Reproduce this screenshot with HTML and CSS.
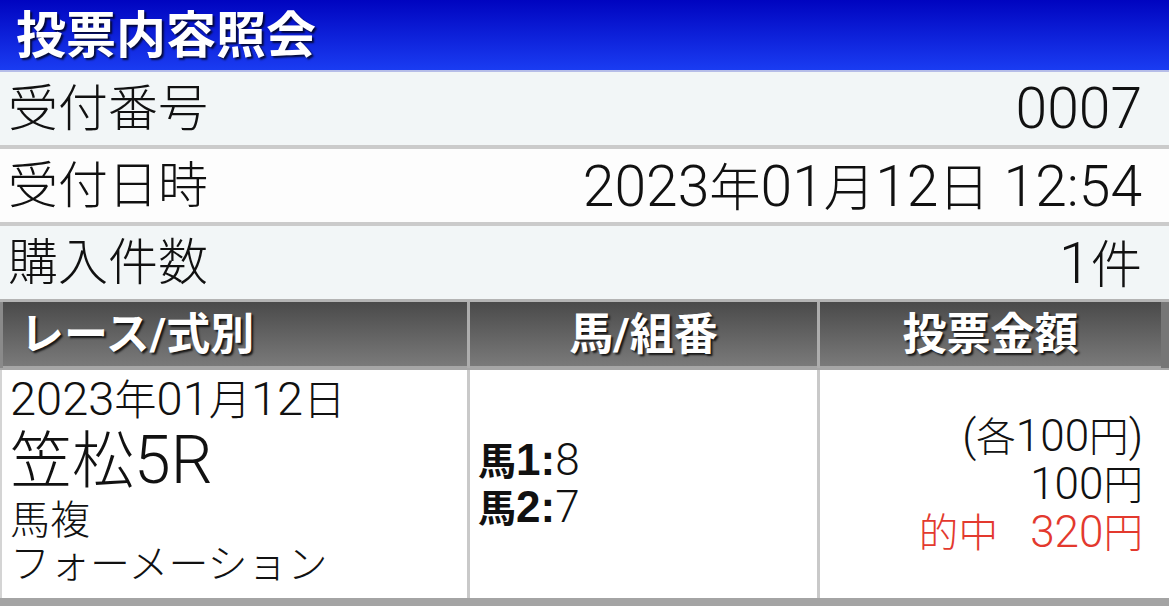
FILE: index.html
```html
<!DOCTYPE html>
<html lang="ja">
<head>
<meta charset="utf-8">
<title>投票内容照会</title>
<link rel="stylesheet" href="styles.css">
</head>
<body>
<div class="page">
  <header class="title"><span class="title-text">投票内容照会</span></header>
  <section class="info">
    <div class="row alt"><span class="label">受付番号</span><span class="value">0007</span></div>
    <div class="row"><span class="label">受付日時</span><span class="value">2023<span class="k">年</span>01<span class="k">月</span>12<span class="k">日</span> 12:54</span></div>
    <div class="row alt last"><span class="label">購入件数</span><span class="value">1<span class="k">件</span></span></div>
  </section>
  <section class="table">
    <div class="thead">
      <div class="th first">レース/式別</div>
      <div class="th">馬/組番</div>
      <div class="th lastc">投票金額</div>
    </div>
    <div class="tbody">
      <div class="td c1">
        <div class="date">2023<span class="k">年</span>01<span class="k">月</span>12<span class="k">日</span></div>
        <div class="race"><span class="kr">笠松</span>5R</div>
        <div class="kind">馬複</div>
        <div class="kind">フォーメーション</div>
      </div>
      <div class="td c2">
        <div class="pick"><b><span class="kb">馬</span>1:</b>8</div>
        <div class="pick"><b><span class="kb">馬</span>2:</b>7</div>
      </div>
      <div class="td c3">
        <div class="amt">(<span class="k">各</span>100<span class="k">円</span>)</div>
        <div class="amt">100<span class="k">円</span></div>
        <div class="amt hit"><span class="k">的中</span>&nbsp;&nbsp;&nbsp;320<span class="k">円</span></div>
      </div>
    </div>
  </section>
</div>
</body>
</html>
```
FILE: styles.css
```css
* { box-sizing: border-box; }
html, body { margin: 0; padding: 0; background: #ffffff; }
body {
  width: 1169px;
  height: 606px;
  overflow: hidden;
  font-family: Roboto, "Noto Sans CJK JP", sans-serif;
  font-weight: 300;
  color: #111111;
}
.k { font-family: "Noto Sans CJK JP", sans-serif; font-size: 0.9em; }

.title {
  display: flex;
  align-items: center;
  height: 72px;
  padding: 0 0 8px 16px;
  background: linear-gradient(#0004c0, #1a3cf2);
  border-bottom: 2px solid #b6bde8;
}
.title-text {
  color: #ffffff;
  font-family: "Noto Sans CJK JP", sans-serif;
  font-weight: 700;
  font-size: 50px;
  line-height: 56px;
  text-shadow: 2px 2px 2px rgba(0, 0, 0, 0.75);
}

.row {
  display: flex;
  justify-content: space-between;
  align-items: center;
  height: 77px;
  padding: 0 27px 0 8px;
  background: #fdfdfd;
  border-bottom: 4px solid #cbcbcb;
}
.row.alt { background: #f2f6f7; }
.row.last { height: 76px; border-bottom: 3px solid #b4b4b4; }
.label {
  font-family: "Noto Sans CJK JP", sans-serif;
  font-size: 50px;
  line-height: 60px;
  margin-bottom: 9px;
}
.value {
  font-size: 57px;
  line-height: 60px;
  white-space: pre;
}

.thead {
  display: grid;
  grid-template-columns: 467px 350px 1fr;
  height: 68px;
  background: linear-gradient(#4a4a4a, #7a7a7a);
  border-bottom: 4px solid #a6a6a6;
}
.th {
  color: #ffffff;
  font-family: Roboto, "Noto Sans CJK JP", sans-serif;
  font-weight: 700;
  font-size: 44px;
  line-height: 66px;
  text-align: center;
  border-left: 3px solid #adadad;
  text-shadow: 2px 2px 2px rgba(0, 0, 0, 0.8);
}
.th.first {
  text-align: left;
  padding-left: 17px;
  border-left: 3px solid #8a8a8a;
}
.th.lastc { border-right: 8px solid #767676; }

.tbody {
  display: grid;
  grid-template-columns: 467px 350px 1fr;
  height: 240px;
  border-bottom: 12px solid #a4a4a4;
}
.td {
  border-left: 3px solid #c9c9c9;
  background: #ffffff;
}
.c1 { border-left: 2px solid #d4d4d4; padding: 4px 8px 8px 8px; }
.c2 {
  display: flex;
  flex-direction: column;
  justify-content: center;
  padding-left: 8px;
  padding-bottom: 2px;
}
.c3 {
  display: flex;
  flex-direction: column;
  justify-content: center;
  align-items: flex-end;
  padding-right: 26px;
  padding-bottom: 2px;
}
.date { font-size: 47px; line-height: 46px; }
.race { font-size: 66px; line-height: 68px; }
.kr { font-family: "Noto Sans CJK JP", sans-serif; font-size: 62px; }
.kind {
  font-family: "Noto Sans CJK JP", sans-serif;
  font-size: 40px;
  line-height: 44px;
}
.pick { font-size: 44px; line-height: 45px; }
.pick b { font-weight: 700; font-family: "Liberation Sans", "Noto Sans CJK JP", sans-serif; }
.kb { font-family: "Noto Sans CJK JP", sans-serif; font-size: 38px; font-weight: 700; }
.amt { font-size: 44px; line-height: 46px; white-space: pre; }
.hit { color: #e3392e; }
```
